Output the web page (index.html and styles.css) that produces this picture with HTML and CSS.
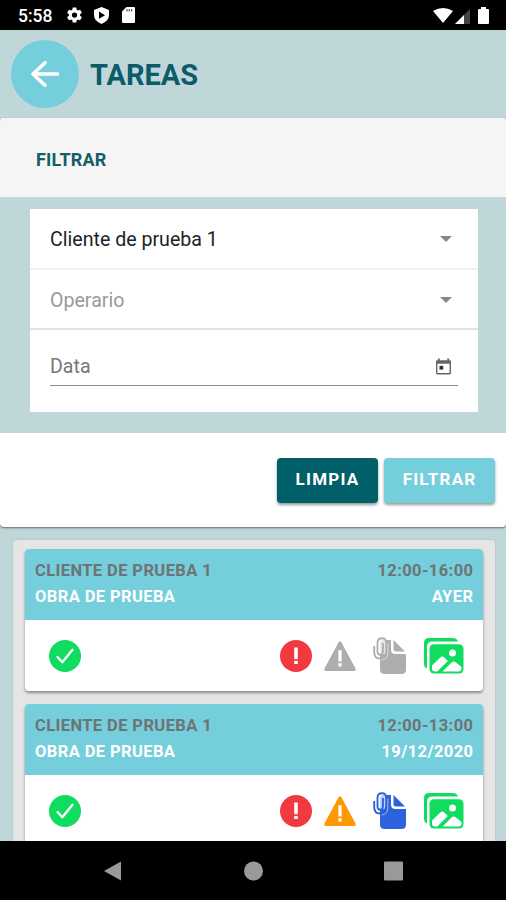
FILE: index.html
```html
<!DOCTYPE html>
<html lang="es">
<head>
<meta charset="utf-8">
<title>Tareas</title>
<link rel="stylesheet" href="styles.css">
</head>
<body>
<svg class="defs" aria-hidden="true">
  <symbol id="i-check" viewBox="0 0 32 32"><circle cx="16" cy="16" r="16" fill="#10dc60"/><path d="M8.500 17l4.800 5.200L23.500 9.800" fill="none" stroke="#fff" stroke-width="2.300" stroke-linecap="round" stroke-linejoin="round"/></symbol>
  <symbol id="i-alert" viewBox="0 0 32 32"><circle cx="16" cy="16" r="16" fill="#f13a40"/><path d="M14.200 7.500h3.600v11.800h-3.600zM14.200 21h3.600v3h-3.600z" fill="#fff"/></symbol>
  <symbol id="i-warn" viewBox="0 0 32 30"><path d="M14.600 1.200q1.400-2 2.800 0L31.500 27.500Q32.400 30 30 30H2Q-.4 30 .5 27.500z" fill="currentColor"/><path d="M14.400 9.300h3.200v11.200h-3.200zM14.400 22.200h3.200v3.300h-3.200z" fill="#fff"/></symbol>
  <symbol id="i-doc" viewBox="0 0 34 38"><path d="M7 22.500V6.500Q7 3 10.500 3H18V12.500Q18 17 22.500 17H33V32.500Q33 37 28.500 37H12Q7 37 7 32.500z" fill="currentColor"/><path d="M20.500 3l11.500 11.500H23Q20.500 14.500 20.500 12z" fill="currentColor"/><rect x="4.500" y="2" width="8.500" height="15.500" rx="4.200" fill="#fff" fill-opacity=".7"/><path d="M14.800 6.500V16q0 6.300-6 6.800" fill="none" stroke="#fff" stroke-opacity=".6"/><path d="M1.200 9v6Q1.200 21.500 7 21.500q6.200 0 6.200-6V6Q13.200 1.300 9 1.300 4.500 1.300 4.500 6v8.500q0 3.200 2.700 3.200 2.700 0 2.700-3.200V6" fill="none" stroke="currentColor" stroke-width="1.900"/></symbol>
  <symbol id="i-images" viewBox="0 0 40 36"><path d="M3 30.500Q0 29.500 0 25.500V5Q0 0 5 0h23.500Q33 0 34 3.500H8.500Q3 3.500 3 9z" fill="#10dc60"/><rect x="5.500" y="6.200" width="34" height="29.300" rx="4.500" fill="#10dc60"/><circle cx="28.500" cy="15" r="3.500" fill="#fff"/><path d="M8 27.500l8.300-8q2-1.800 4 0l3.500 3.500-10.500 10.500h-2.300q-3 0-3-3zM18.500 33.500l9.600-9.400q1.600-1.400 3.300 0L37.500 29v1.500q0 3-3 3z" fill="#fff"/></symbol>
</svg>
<div class="phone">
  <div class="status">
    <span class="clock">5:58</span>
    <svg class="s-gear" viewBox="2 2 20 20"><path fill="#fff" fill-rule="evenodd" d="M19.430 12.980c.04-.32.07-.64.07-.98s-.03-.66-.07-.98l2.110-1.650c.19-.15.24-.42.12-.64l-2-3.460c-.12-.22-.39-.3-.61-.22l-2.490 1c-.52-.4-1.080-.73-1.690-.98l-.38-2.650A.49.49 0 0 0 14 2h-4c-.25 0-.46.18-.49.42l-.38 2.650c-.61.25-1.170.59-1.690.98l-2.490-1c-.23-.09-.49 0-.61.22l-2 3.460c-.13.22-.07.49.12.64l2.110 1.650c-.04.32-.07.65-.07.98s.03.66.07.98l-2.110 1.650c-.19.15-.24.42-.12.64l2 3.460c.12.22.39.3.61.22l2.490-1c.52.4 1.080.73 1.690.98l.38 2.650c.03.24.24.42.49.42h4c.25 0 .46-.18.49-.42l.38-2.650c.61-.25 1.170-.59 1.690-.98l2.490 1c.23.09.49 0 .61-.22l2-3.460c.12-.22.07-.49-.12-.64zM12 15.500a3.500 3.500 0 1 1 0-7 3.500 3.500 0 0 1 0 7z"/></svg>
    <svg class="s-shield" viewBox="0 0 16 18"><path fill="#fff" d="M8 0l8 3v5.500Q16 15 8 18 0 15 0 8.500V3z"/><path d="M5.300 4.800v7.600L11.800 8.600z"/></svg>
    <svg class="s-card" viewBox="0 0 13 16"><path fill="#fff" d="M4.500 0H12q1 0 1 1v14q0 1-1 1H1q-1 0-1-1V4.500z"/><path d="M5 2v2.500M7.300 2v2.500M9.600 2v2.500" stroke="#555" stroke-width="1.200"/></svg>
    <span class="grow"></span>
    <svg class="s-wifi" viewBox="0 0 20 15"><path fill="#fff" d="M0 3Q10-3 20 3L10 15z"/></svg>
    <svg class="s-signal" viewBox="0 0 15 15"><path fill="#444" d="M15 0v15H0z"/><path fill="#fff" d="M9 6v9H0z"/></svg>
    <svg class="s-battery" viewBox="0 0 11 17"><path fill="#fff" d="M3 0h5v2h2q1 0 1 1v13q0 1-1 1H1q-1 0-1-1V3q0-1 1-1h2z"/></svg>
  </div>
  <header class="topbar">
    <div class="back"><svg viewBox="0 0 28 26"><path d="M26.500 13H2M14 1.800L2 13l12 11.200" fill="none" stroke="#fff" stroke-width="3.600" stroke-linecap="round" stroke-linejoin="round"/></svg></div>
    <h1 class="title">TAREAS</h1>
  </header>
  <section class="filter">
    <div class="filter-head">FILTRAR</div>
    <div class="filter-body">
      <div class="form">
        <div class="select"><span class="client">Cliente de prueba 1</span><i class="caret"></i></div>
        <div class="select worker-row"><span class="worker">Operario</span><i class="caret"></i></div>
        <div class="date"><span class="date-label">Data</span><svg viewBox="0 0 16 17"><path fill="#666" fill-rule="evenodd" d="M2 1.700V0h2v1.700h8V0h2v1.700h.5Q16 1.700 16 3.200v12.300q0 1.500-1.500 1.500h-13Q0 17 0 15.500V3.200Q0 1.700 1.500 1.700zM1.500 5.500v10h13v-10z"/><path fill="#333" d="M3.700 7.800h4v4h-4z"/></svg></div>
      </div>
    </div>
    <div class="actions"><button class="btn clear">LIMPIA</button><button class="btn apply">FILTRAR</button></div>
  </section>
  <main class="list">
    <article class="task">
      <div class="task-head">
        <div class="line muted"><span class="customer">CLIENTE DE PRUEBA 1</span><span class="hours">12:00-16:00</span></div>
        <div class="line"><span class="site">OBRA DE PRUEBA</span><span class="ayer">AYER</span></div>
      </div>
      <div class="icons"><svg class="round"><use href="#i-check"/></svg><span class="grow"></span><svg class="round"><use href="#i-alert"/></svg><svg class="warn off"><use href="#i-warn"/></svg><svg class="doc off"><use href="#i-doc"/></svg><svg class="images"><use href="#i-images"/></svg></div>
    </article>
    <article class="task">
      <div class="task-head">
        <div class="line muted"><span class="customer">CLIENTE DE PRUEBA 1</span><span class="hours">12:00-13:00</span></div>
        <div class="line"><span class="site">OBRA DE PRUEBA</span><span class="day">19/12/2020</span></div>
      </div>
      <div class="icons"><svg class="round"><use href="#i-check"/></svg><span class="grow"></span><svg class="round"><use href="#i-alert"/></svg><svg class="warn"><use href="#i-warn"/></svg><svg class="doc"><use href="#i-doc"/></svg><svg class="images"><use href="#i-images"/></svg></div>
    </article>
  </main>
  <nav class="nav">
    <svg viewBox="0 0 18 20"><path d="M17.500.5v19L.5 10z"/></svg>
    <svg viewBox="0 0 18 18"><circle cx="9" cy="9" r="9"/></svg>
    <svg viewBox="0 0 19 19"><rect width="19" height="19" rx="1"/></svg>
  </nav>
</div>
</body>
</html>
```
FILE: styles.css
```css
* { box-sizing: border-box; }
body { margin: 0; font-family: Roboto, "Liberation Sans", sans-serif; }
svg { display: block; flex: none; }
.defs { position: absolute; width: 0; height: 0; }
.phone { width: 506px; height: 900px; display: flex; flex-direction: column; overflow: hidden; background: #c0d7da; }
.grow { flex: 1; }

.status { flex: none; height: 30px; padding: 0 17px 0 18px; display: flex; align-items: center; background: #000; color: #fff; }
.clock { width: 49px; font-size: 17.500px; font-weight: 500; line-height: 30px; padding-top: 2px; }
.s-gear { width: 15px; height: 16px; }
.s-shield { width: 15px; height: 17px; margin-left: 12px; }
.s-card { width: 13px; height: 16px; margin-left: 13px; }
.s-wifi { width: 20px; height: 15px; }
.s-signal { width: 15px; height: 15px; margin: 2px 8px 0 2px; }
.s-battery { width: 11px; height: 17px; }

.topbar { flex: none; height: 88px; padding: 0 0 0 11px; display: flex; align-items: center; }
.back { width: 68px; height: 68px; border-radius: 50%; background: #75cedb; display: flex; align-items: center; justify-content: center; }
.back svg { width: 28px; height: 26px; }
.title { margin: 1px 0 0 11px; font-size: 29px; font-weight: 700; color: #0c5b68; line-height: 34px; }

.filter { flex: none; height: 409px; border-radius: 4px; overflow: hidden; background: #fff; box-shadow: 0 1px 2px rgba(0, 0, 0, .5); }
.filter-head { height: 79px; padding-left: 36px; line-height: 83px; background: #f5f5f5; color: #155d69; font-size: 18px; font-weight: 700; letter-spacing: .2px; }
.filter-body { height: 236px; padding: 12px 28px 0 30px; background: #c0d7da; }
.form { height: 203px; background: #fff; }
.select { height: 61px; padding: 1px 26px 0 20px; display: flex; align-items: center; justify-content: space-between; border-bottom: 2px solid #f0f0f0; font-size: 19.600px; color: #222; }
.worker-row { height: 60px; padding-top: 2px; border-color: #e2e2e2; }
.worker { color: #999; }
.caret { border: 6px solid transparent; border-top-color: #888; border-bottom: 0; }
.date { height: 56px; margin: 0 20px; padding: 18px 7px 0 0; display: flex; align-items: center; justify-content: space-between; border-bottom: 1px solid #8e8e8e; font-size: 19.600px; color: #777; }
.date svg { width: 15px; height: 17px; }
.actions { height: 94px; padding: 0 11px; display: flex; align-items: center; justify-content: flex-end; gap: 6px; }
.btn { height: 45px; padding: 0 0 2px; border: 0; border-radius: 4px; color: #fff; font: 700 17px Roboto, sans-serif; letter-spacing: 1.200px; box-shadow: 0 2px 3px rgba(0, 0, 0, .4); }
.clear { width: 101px; background: #005f69; }
.apply { width: 111px; background: #75cedb; }

.list { flex: 1; min-height: 0; overflow: hidden; margin: 13px 11px 0 13px; padding: 9px 12px 0; border-radius: 4px 4px 0 0; background: #e5e5e5; box-shadow: 0 0 2px rgba(0, 0, 0, .2); }
.task { height: 142px; margin-bottom: 13px; border-radius: 4px; overflow: hidden; background: #fff; box-shadow: 0 2px 3px rgba(0, 0, 0, .4); }
.task-head { height: 71px; padding: 9px 10px 0; background: #75cedb; color: #fff; font-size: 16.500px; font-weight: 700; line-height: 26px; }
.line { display: flex; justify-content: space-between; white-space: nowrap; letter-spacing: .4px; }
.line span:last-child { margin-right: -.4px; }
.muted { color: #6d7475; }
.icons { height: 71px; padding: 1px 19px 0 24px; display: flex; align-items: center; }
.round { width: 32px; height: 32px; }
.warn { width: 32px; height: 30px; margin-left: 12px; color: #ff9800; }
.doc { width: 34px; height: 38px; margin: 0 17px; color: #2c62dc; }
.images { width: 40px; height: 36px; }
.off { color: #aeaeae; }

.nav { flex: none; height: 59px; padding: 0 103px; display: flex; align-items: center; justify-content: space-between; background: #000; fill: #999; }
.nav svg { width: 19px; height: 20px; }
```
